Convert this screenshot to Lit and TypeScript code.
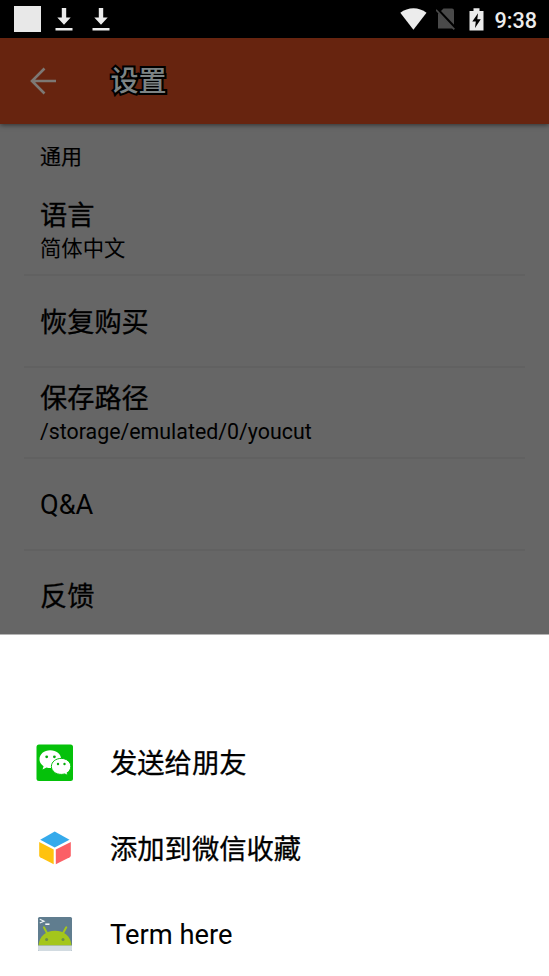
import { LitElement, html, css, svg, nothing } from "lit";
import { customElement } from "lit/decorators.js";

interface Setting { title: string; detail?: string }
interface Target { label: string; icon: unknown }

const settings: Setting[] = [
  { title: "语言", detail: "简体中文" },
  { title: "恢复购买" },
  { title: "保存路径", detail: "/storage/emulated/0/youcut" },
  { title: "Q&A" },
  { title: "反馈" },
];

const chatIcon = svg`
  <rect x="0.500" y="0.500" width="36.500" height="36.500" rx="2.500" fill="#05c10a"/>
  <path d="M14.300 6.300C8 6.300 3.500 10.200 3.500 15.200c0 2.900 1.600 5.400 4.100 7l-1.100 3.300 4-2c1.200.4 2.500.5 3.800.5 6 0 10.800-3.900 10.800-8.900s-4.800-8.800-10.800-8.800z" fill="#fff"/>
  <path d="M25.300 14.400c-5.600 0-9.900 3.500-9.900 8 0 4.600 4.300 8 9.900 8 1.200 0 2.300-.2 3.400-.5l3.300 1.700-.9-2.800c2.400-1.500 3.700-3.800 3.700-6.400 0-4.500-4.200-8-9.500-8z" fill="#fff" stroke="#05c10a" stroke-width="1"/>
  <g fill="#06a80b"><circle cx="10.700" cy="12.800" r="1.400"/><circle cx="18.400" cy="12.800" r="1.400"/><circle cx="22" cy="20" r="1.200"/><circle cx="28.500" cy="20" r="1.200"/></g>`;

const cubeIcon = svg`
  <path d="M18.700 2.600 33.500 10.700 18.700 18.500 4.200 10.700z" fill="#35aaeb"/>
  <path d="M3.200 13 17.700 20.600V35.200L4.200 28.200Q3.200 27.600 3.200 26.500z" fill="#ffc20e"/>
  <path d="M34.800 13 19.800 20.600V35.200L33.700 28.200Q34.800 27.600 34.800 26.500z" fill="#fb6066"/>`;

const terminalIcon = svg`
  <rect x="2" y="2" width="34" height="34" rx="1.500" fill="#607d8f"/>
  <path d="M2.500 30.500C3.300 21.300 9.600 15.700 19 15.700s15.700 5.600 16.500 14.800z" fill="#a4c61c"/>
  <path d="M11.200 18.500 7.900 12.300M26.800 18.500 30.300 12.300" stroke="#a4c61c" stroke-width="2" stroke-linecap="round"/>
  <circle cx="10.600" cy="24.500" r="1.500" fill="#6d8e49"/><circle cx="27" cy="24.500" r="1.500" fill="#6d8e49"/>
  <path d="M2 30.500H36V34.500Q36 36 34.500 36H3.500Q2 36 2 34.500z" fill="#d2dbe1"/>
  <path d="M3.800 4.200 8 6.200 3.800 8" fill="none" stroke="#eef3f5" stroke-width="1.200"/><path d="M9.300 9.200H13.500" stroke="#fff" stroke-width="1.500"/>`;

const targets: Target[] = [
  { label: "发送给朋友", icon: chatIcon },
  { label: "添加到微信收藏", icon: cubeIcon },
  { label: "Term here", icon: terminalIcon },
];

const hasHan = (text: string) => /\p{Script=Han}/u.test(text);

const download = html`<svg class="download" width="18" height="24" viewBox="0 0 18 24" fill="#ececec">
  <path d="M6.800 1H11.200V10.500H15.700L9 17.800 2.300 10.500H6.800z"/><rect x="0.500" y="21" width="17" height="2.500"/></svg>`;

@customElement("status-bar")
class StatusBar extends LitElement {
  static styles = css`
    :host { display: flex; align-items: center; height: 38px; background: #000; box-sizing: border-box; padding: 0 12px 0 14px; color: #ececec; font: 500 21.600px/38px Roboto, sans-serif; }
    svg { display: block; flex: none; }
    .block { width: 27px; height: 26px; background: #e8e8e8; }
    .download { margin-left: 14px; }
    .download + .download { margin-left: 19px; }
    .right { margin-left: auto; display: flex; align-items: center; }
    .sim { margin-left: 9px; }
    .battery { margin-left: 13px; }
    .time { margin-left: 10px; padding-top: 2px; height: 36px; }
  `;
  render() {
    return html`
      <div class="block"></div>${download}${download}
      <div class="right">
        <svg width="27" height="22" viewBox="0 0 27 22"><path d="M0.300 4.800C8-1.200 19-1.200 26.500 4.800L13.400 21.800z" fill="#ececec"/></svg>
        <svg class="sim" width="20" height="22" viewBox="0 0 20 22"><path d="M7.500 0.500H16Q18 .5 18 2.500V20.500H2V6z" fill="#4a4a4a"/><path d="M1 1 20 21" stroke="#000" stroke-width="3"/><path d="M0 1.800 18.300 21.300" stroke="#4a4a4a" stroke-width="1.700"/></svg>
        <svg class="battery" width="15" height="23" viewBox="0 0 15 23"><path d="M4.500 0.300H10.500V3H14.500V22.500H.5V3H4.500z" fill="#ececec"/><path d="M9 5.300 3.300 13.500H6.800L6 20 11.800 11.300H8.300z" fill="#000"/></svg>
        <span class="time">9:38</span>
      </div>`;
  }
}

@customElement("settings-page")
class SettingsPage extends LitElement {
  static styles = css`
    :host { display: block; background: #666; color: #000; overflow: hidden; }
    .toolbar { display: flex; align-items: center; height: 85.500px; padding-left: 30px; background: #67240f; box-shadow: 0 1px 5px rgba(0, 0, 0, .55); }
    .title { margin: 2px 0 0 53.500px; font-size: 28px; line-height: 40px; color: #7d8485; -webkit-text-stroke: 4px #000; paint-order: stroke fill; font-weight: 500; }
    .section { height: 61.500px; padding-left: 40px; font-size: 21px; line-height: 66px; -webkit-text-stroke: .2px #000; }
    .item { display: flex; flex-direction: column; justify-content: center; box-sizing: border-box; height: 91.400px; margin: 0 24px; padding: 2px 0 0 16px; border-bottom: 2px solid #616161; }
    .item:last-child { border: 0; padding-top: 0; }
    .name { font-size: 27.200px; line-height: 34px; }
    .han { padding-top: 2px; -webkit-text-stroke: .3px #000; }
    .paired { padding-top: 3px; line-height: 33px; margin-bottom: -1px; padding-bottom: 1px; }
    .detail { font-size: 21.350px; line-height: 31px; }
  `;
  render() {
    return html`
      <div class="toolbar">
        <svg width="27" height="28" viewBox="0 0 27 28" fill="none" stroke="#7d7874" stroke-width="2.600"><path d="M26 14H3M14.500 1.500 2 14 14.500 26.500"/></svg>
        <div class="title">设置</div>
      </div>
      <div class="section">通用</div>
      <div class="list">${settings.map((s) => html`
        <div class="item"><div class="name ${hasHan(s.title) ? "han" : ""} ${s.detail ? "paired" : ""}">${s.title}</div>${s.detail ? html`<div class="detail">${s.detail}</div>` : nothing}</div>`)}
      </div>`;
  }
}

@customElement("share-sheet")
class ShareSheet extends LitElement {
  static styles = css`
    :host { display: block; box-sizing: border-box; background: #fff; padding-top: 85px; color: #000; border-top: 1px solid #b4b4b4; }
    .target { display: flex; align-items: center; height: 85.500px; padding-left: 36px; font-size: 27.300px; line-height: 40px; }
    .target span { padding-top: 2px; }
    .target .han { padding-top: 3px; -webkit-text-stroke: .3px #000; }
    svg { display: block; margin-right: 36px; }
  `;
  render() {
    return html`${targets.map((t) => html`
      <div class="target"><svg width="38" height="38" viewBox="0 0 38 38">${t.icon}</svg><span class=${hasHan(t.label) ? "han" : ""}>${t.label}</span></div>`)}`;
  }
}

@customElement("app-root")
class AppRoot extends LitElement {
  static styles = css`
    :host { display: grid; grid-template-rows: 38px 596px 342px; height: 976px; overflow: hidden; font-family: Roboto, "Noto Sans CJK SC", sans-serif; }
  `;
  render() {
    return html`<status-bar></status-bar><settings-page></settings-page><share-sheet></share-sheet>`;
  }
}
